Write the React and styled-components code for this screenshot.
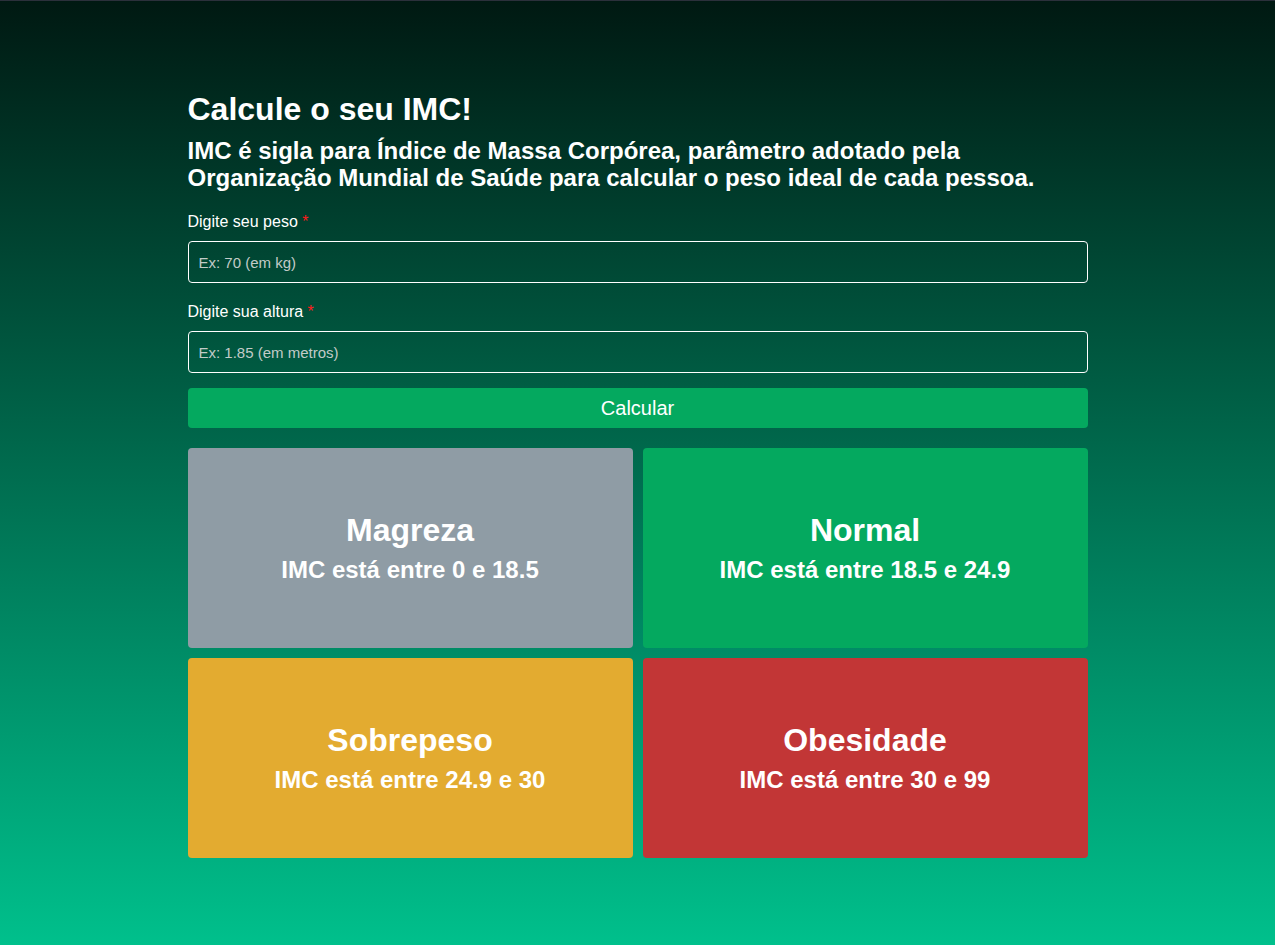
import React from "react";
import styled, { createGlobalStyle } from "styled-components";

const GlobalStyle = createGlobalStyle`
  * {
    box-sizing: border-box;
  }
  body {
    margin: 0;
    font-family: "Liberation Sans", Arial, sans-serif;
  }
`;

const categories = [
  { title: "Magreza", range: "IMC está entre 0 e 18.5", color: "#8f9ca5" },
  { title: "Normal", range: "IMC está entre 18.5 e 24.9", color: "#04a95f" },
  { title: "Sobrepeso", range: "IMC está entre 24.9 e 30", color: "#e3ab30" },
  { title: "Obesidade", range: "IMC está entre 30 e 99", color: "#c23636" },
];

const App = () => {
  return (
    <Page>
      <GlobalStyle />
      <Container>
        <Title>Calcule o seu IMC!</Title>
        <Subtitle>
          IMC é sigla para Índice de Massa Corpórea, parâmetro adotado pela
          Organização Mundial de Saúde para calcular o peso ideal de cada pessoa.
        </Subtitle>

        <Field>
          <Label>
            Digite seu peso <Required>*</Required>
          </Label>
          <Input placeholder="Ex: 70 (em kg)" />
        </Field>
        <Field>
          <Label>
            Digite sua altura <Required>*</Required>
          </Label>
          <Input placeholder="Ex: 1.85 (em metros)" />
        </Field>

        <Button>Calcular</Button>

        <Grid>
          {categories.map((c) => (
            <Card key={c.title} $bg={c.color}>
              <CardTitle>{c.title}</CardTitle>
              <CardRange>{c.range}</CardRange>
            </Card>
          ))}
        </Grid>
      </Container>
    </Page>
  );
};

export default App;

const Page = styled.div`
  min-height: 100vh;
  border-top: 1px solid #2b303b;
  background: linear-gradient(to bottom, #001912 0%, #00c08c 100%);
  padding-top: 90px;
  color: #fff;
`;

const Container = styled.div`
  width: 900px;
  margin: 0 auto;
  display: flex;
  flex-direction: column;
`;

const Title = styled.h1`
  margin: 0;
  font-size: 32px;
  line-height: 36px;
  font-weight: 700;
`;

const Subtitle = styled.h2`
  margin: 10px 0 0;
  font-size: 24px;
  line-height: 27px;
  font-weight: 700;
`;

const Field = styled.div`
  display: flex;
  flex-direction: column;
  gap: 10px;
  margin-top: 21px;

  & + & {
    margin-top: 19px;
  }
`;

const Label = styled.label`
  font-size: 16px;
  line-height: 19px;
`;

const Required = styled.span`
  color: #ff1a1a;
`;

const Input = styled.input`
  height: 42px;
  width: 100%;
  padding: 0 10px;
  background: transparent;
  border: 1px solid #fff;
  border-radius: 4px;
  color: #fff;
  font-family: inherit;
  font-size: 15px;
  outline: none;

  &::placeholder {
    color: #c2cbc8;
  }
`;

const Button = styled.button`
  margin-top: 15px;
  height: 40px;
  border: none;
  border-radius: 4px;
  background: #04a95f;
  color: #fff;
  font-family: inherit;
  font-size: 20px;
  cursor: pointer;
`;

const Grid = styled.div`
  margin-top: 20px;
  display: grid;
  grid-template-columns: 1fr 1fr;
  grid-auto-rows: 200px;
  gap: 10px;
`;

const Card = styled.div`
  background: ${(p) => p.$bg};
  border-radius: 4px;
  display: flex;
  flex-direction: column;
  align-items: center;
  justify-content: center;
  gap: 7px;
  padding-bottom: 2px;
`;

const CardTitle = styled.div`
  font-size: 32px;
  line-height: 38px;
  font-weight: 700;
`;

const CardRange = styled.div`
  font-size: 24px;
  line-height: 28px;
  font-weight: 700;
`;
